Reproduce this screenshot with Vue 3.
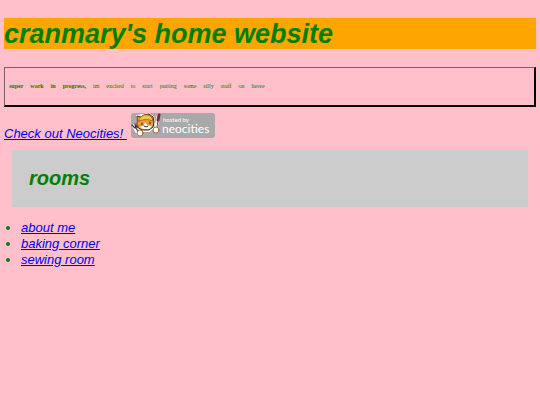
<template>
  <div class="page">
    <h1>cranmary's home website</h1>

    <p class="notice">
      <b v-for="word in boldWords" :key="word">{{ word }}</b>
      <span v-for="word in words" :key="word">{{ word }}</span>
    </p>

    <a class="neocities" href="#neocities">
      <span>Check out Neocities!&nbsp;</span>
      <svg class="badge" viewBox="0 0 84 25" role="img" aria-label="hosted by neocities">
        <rect width="84" height="25" rx="3" fill="#a9a9a9" />
        <text x="32" y="9" class="badge-small">hosted by</text>
        <text x="31" y="20" class="badge-name">neocities</text>
        <g stroke-linecap="round" stroke-linejoin="round">
          <path d="M27 3 L25 16" stroke="#fff" stroke-width="3" />
          <path d="M3 13 L8 21" stroke="#fff" stroke-width="4" />
          <path d="M6 8 L6 3 L12 2 L18 1 L22 4 L23 9 L22 15 L18 18 L11 18 L6 14 Z" fill="#fff" stroke="#fff" stroke-width="2" />
          <path d="M6 8 L6 3 L10 4 L13 2 L18 1 L22 4 L23 9 L22 14 L18 17 L11 17 L6 14 Z" fill="#f19a38" stroke="#3b2418" />
          <path d="M8 8 Q8 4 13 2 Q19 1 21 5 L22 8 Q15 5 8 8 Z" fill="#f5c83c" stroke="#8a571b" stroke-width=".7" />
          <path d="M14 9 L13 12 L9 14 L12 16 L18 16 L21 13 L16 12 Z" fill="#fff" />
          <path d="M11 10 V12 M19 9 V11 M13 13 L15 14 L17 13" fill="none" stroke="#302018" />
          <path d="M28 2 L27 7" stroke="#7e2633" stroke-width="3" />
          <path d="M27 8 L26 14" stroke="#6c4938" stroke-width="1" />
          <path d="M1 12 L4 15 L7 13 M4 11 L5 15 L8 20" fill="none" stroke="#353535" stroke-width="1.2" />
          <circle cx="9" cy="20" r="3" fill="#fff" stroke="#8a571b" stroke-width=".8" />
          <circle cx="25" cy="17" r="3" fill="#fff" stroke="#8a571b" stroke-width=".8" />
        </g>
      </svg>
    </a>

    <section class="rooms">
      <h2>rooms</h2>
    </section>

    <ul>
      <li v-for="room in rooms" :key="room">
        <a href="#room">{{ room }}</a>
      </li>
    </ul>
  </div>
</template>

<script setup>
const boldWords = ['super', 'work', 'in', 'progress,']
const words = ['im', 'excited', 'to', 'start', 'putting', 'some', 'silly', 'stuff', 'on', 'heree']
const rooms = ['about me', 'baking corner', 'sewing room']
</script>

<style>
body {
  background-color: pink;
}
</style>

<style scoped>
.page {
  padding: 18px 4px;
  color: green;
  font-family: "Liberation Sans", Arial, sans-serif;
  font-size: 13px;
  font-style: italic;
}

h1 {
  margin: 0 0 18px;
  padding-top: 2px;
  background-color: orange;
  font-size: 27px;
  line-height: 29px;
}

.notice {
  display: flex;
  gap: 7px;
  margin: 0 0 6px;
  padding: 14px 4px;
  border-style: solid;
  border-width: 1px 2px 2px 1px;
  border-color: #805f65 #000 #000 #805f65;
  font-family: "Liberation Serif", "Times New Roman", serif;
  font-size: 6px;
  font-style: normal;
  line-height: 9px;
}

.neocities {
  display: flex;
  align-items: flex-end;
  gap: 4px;
  width: fit-content;
}

a {
  color: #0000ee;
}

.neocities span {
  line-height: 9px;
}

.badge {
  width: 84px;
  height: 25px;
  font-style: normal;
}

.badge-small {
  fill: #fff;
  font-family: Lato, sans-serif;
  font-size: 6px;
}

.badge-name {
  fill: #fff;
  font-family: Lato, sans-serif;
  font-size: 12px;
}

.rooms {
  margin: 12px 8px 13px;
  padding: 16px 17px;
  background-color: #ccc;
}

h2 {
  margin: 0;
  font-size: 20px;
  line-height: 25px;
}

ul {
  margin: 0;
  padding-left: 17px;
  line-height: 16px;
}
</style>
